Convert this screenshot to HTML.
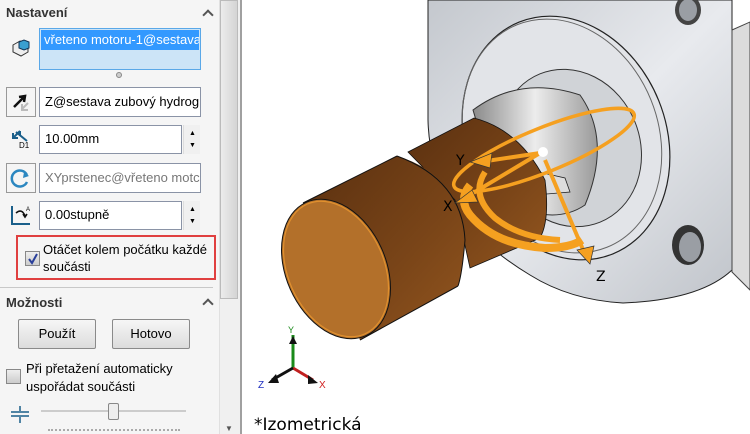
<!DOCTYPE html>
<html><head><meta charset="utf-8"><style>
*{margin:0;padding:0;box-sizing:border-box}
body{width:750px;height:434px;overflow:hidden;position:relative;background:#fff;font-family:"Liberation Sans",sans-serif;font-size:13px;color:#000}
.panel{position:absolute;left:0;top:0;width:220px;height:434px;background:#f5f5f5}
.abs{position:absolute}
.inp{position:absolute;background:#fff;border:1px solid #8a93a6;padding:0 0 0 5px;line-height:26px;white-space:nowrap;overflow:hidden;font-size:13px}
.spin{position:absolute;width:17px;background:#f0f0f0;border-left:1px solid #ddd}
.btn{position:absolute;border:1px solid #8a8a8a;border-radius:2px;background:linear-gradient(#f6f6f6,#dcdcdc);text-align:center;line-height:28px;font-size:13px}
.hdr{position:absolute;font-weight:bold;color:#333;font-size:13px}
.chev{position:absolute;width:8px;height:8px;border-left:2px solid #555;border-top:2px solid #555;transform:rotate(45deg)}
</style></head><body>
<div class="panel">
 <div class="hdr" style="left:6px;top:5px">Nastavení</div>
 <div class="chev" style="left:204px;top:11px"></div>
 <svg class="abs" style="left:10px;top:36px" width="22" height="22"><path d="M3 9 L10 5 L18 8 L18 16 L11 20 L3 16 Z" fill="#eee" stroke="#333"/><path d="M9 6 L14 4 L19 6 L19 12 L14 14 L9 12Z" fill="#3a9fd0" stroke="#135"/></svg>
 <div class="abs" style="left:39px;top:28px;width:162px;height:42px;border:1px solid #5aa8e8;background:#cce4f7"></div>
 <div class="abs" style="left:41px;top:30px;width:158px;height:20px;background:#3399ff;color:#fff;padding-left:3px;line-height:19px;white-space:nowrap;overflow:hidden">vřeteno motoru-1@sestava</div>
 <div class="abs" style="left:116px;top:72px;width:6px;height:6px;border-radius:50%;border:1px solid #888;background:#ccc"></div>

 <div class="abs" style="left:6px;top:87px;width:30px;height:30px;border:1px solid #999;background:#f5f5f5"></div>
 <svg class="abs" style="left:10px;top:91px" width="22" height="22"><path d="M4 16 L14 6 M9 6 L15 5 L14 11" stroke="#111" stroke-width="2.5" fill="none"/><path d="M12 18 L18 12 M12 13 L12 19 L18 19" stroke="#bbb" stroke-width="2" fill="none"/></svg>
 <div class="inp" style="left:39px;top:87px;width:162px;height:30px;line-height:28px">Z@sestava zubový hydrog</div>

 <svg class="abs" style="left:10px;top:128px" width="22" height="22"><path d="M3 10 L10 3 M3 5 L3 10 L8 10 M10 3 L10 8" stroke="#1a5f8a" stroke-width="2" fill="none"/><path d="M6 4 L17 13" stroke="#1a5f8a" stroke-width="2"/><text x="9" y="20" font-size="8" font-family="Liberation Sans">D1</text></svg>
 <div class="inp" style="left:39px;top:125px;width:143px;height:29px">10.00mm</div>
 <div class="spin" style="left:183px;top:125px;height:29px"><span class="abs" style="left:5px;top:5px;font-size:7px">▲</span><span class="abs" style="left:5px;top:17px;font-size:7px">▼</span></div>

 <div class="abs" style="left:6px;top:163px;width:30px;height:30px;border:1px solid #999;background:#f5f5f5"></div>
 <svg class="abs" style="left:10px;top:167px" width="22" height="22"><path d="M17 8 A8 8 0 1 0 17 15" stroke="#2c87c0" stroke-width="2.5" fill="none"/><path d="M14 5 L19 9 L13 11Z" fill="#2c87c0"/></svg>
 <div class="inp" style="left:39px;top:163px;width:162px;height:30px;line-height:28px;color:#777">XYprstenec@vřeteno motc</div>

 <svg class="abs" style="left:10px;top:204px" width="22" height="22"><path d="M2 2 L2 20 L20 20" stroke="#1a5f8a" stroke-width="2" fill="none"/><path d="M6 9 Q12 4 15 12 M13 10 L15 13 L17 10" stroke="#111" stroke-width="1.6" fill="none"/><text x="16" y="7" font-size="6">A</text></svg>
 <div class="inp" style="left:39px;top:201px;width:143px;height:29px">0.00stupně</div>
 <div class="spin" style="left:183px;top:201px;height:29px"><span class="abs" style="left:5px;top:5px;font-size:7px">▲</span><span class="abs" style="left:5px;top:17px;font-size:7px">▼</span></div>

 <div class="abs" style="left:16px;top:235px;width:200px;height:45px;border:2px solid #e04040"></div>
 <div class="abs" style="left:25px;top:251px;width:15px;height:15px;border:1px solid #888;background:linear-gradient(#eee,#ccc)"></div>
 <svg class="abs" style="left:26px;top:252px" width="14" height="14"><path d="M3 7 L6 11 L11 2" stroke="#2a3f9a" stroke-width="2" fill="none"/></svg>
 <div class="abs" style="left:43px;top:241px;line-height:17px;font-size:13px">Otáčet kolem počátku každé<br>součásti</div>
 <div class="abs" style="left:0;top:287px;width:213px;height:1px;background:#c8c8c8"></div>
 <div class="hdr" style="left:6px;top:295px">Možnosti</div>
 <div class="chev" style="left:204px;top:300px"></div>
 <div class="btn" style="left:18px;top:319px;width:78px;height:30px">Použít</div>
 <div class="btn" style="left:112px;top:319px;width:78px;height:30px">Hotovo</div>
 <div class="abs" style="left:6px;top:369px;width:15px;height:15px;border:1px solid #888;background:linear-gradient(#eee,#ccc)"></div>
 <div class="abs" style="left:26px;top:360px;line-height:18px">Při přetažení automaticky<br>uspořádat součásti</div>
 <svg class="abs" style="left:10px;top:404px" width="20" height="20"><path d="M1 8 H19 M1 12 H19 M10 2 V7 M10 13 V19" stroke="#1a5f8a" stroke-width="1.5"/></svg>
 <div class="abs" style="left:41px;top:410px;width:145px;height:2px;background:#ccc"></div>
 <div class="abs" style="left:108px;top:403px;width:11px;height:17px;border:1px solid #888;background:#eee;border-radius:2px"></div>
 <div class="abs" style="left:48px;top:429px;width:132px;height:3px;border-top:2px dotted #aaa"></div>
</div>
<div class="abs" style="left:219px;top:0;width:21px;height:434px;background:#f0f0f0;border-left:1px solid #e0e0e0"></div>
<div class="abs" style="left:220px;top:0;width:18px;height:299px;background:linear-gradient(90deg,#ececec,#d4d4d4);border:1px solid #bbb"></div>
<div class="abs" style="left:225px;top:424px;font-size:8px;color:#555">▼</div>
<div class="abs" style="left:240px;top:0;width:2px;height:434px;background:#a0a0a0"></div>
<svg class="abs" style="left:242px;top:0" width="508" height="434" viewBox="242 0 508 434">
 <defs>
  <linearGradient id="g1" x1="0" y1="0" x2="1" y2="1"><stop offset="0" stop-color="#c4c8ce"/><stop offset="0.5" stop-color="#e8eaee"/><stop offset="1" stop-color="#c0c4ca"/></linearGradient>
  <linearGradient id="cu" x1="0" y1="0" x2="1" y2="1"><stop offset="0" stop-color="#5a3010"/><stop offset="0.6" stop-color="#7a4518"/><stop offset="1" stop-color="#93561f"/></linearGradient>
  <linearGradient id="sh" x1="0" y1="0" x2="1" y2="0"><stop offset="0" stop-color="#8a8a8a"/><stop offset="0.5" stop-color="#ececec"/><stop offset="1" stop-color="#9a9a9a"/></linearGradient>
 </defs>
 <path d="M428 0 H732 V270 Q700 300 623 303 Q570 300 530 275 Q430 215 428 120 Z" fill="url(#g1)" stroke="#222"/>
 <path d="M732 30 L750 22 V290 L732 272Z" fill="#dcdcdc" stroke="#444"/>
 <ellipse cx="688" cy="10" rx="13" ry="15" fill="#444"/><ellipse cx="688" cy="10" rx="9" ry="11" fill="#9a9ea4"/>
 <ellipse cx="688" cy="245" rx="16" ry="20" fill="#333"/><ellipse cx="690" cy="247" rx="11" ry="15" fill="#9a9ea4"/>
 <ellipse cx="566" cy="138" rx="100" ry="125" transform="rotate(-22 566 138)" fill="#e2e4e8" stroke="#222" stroke-width="1.2"/>
 <ellipse cx="562" cy="136" rx="96" ry="120" transform="rotate(-22 562 136)" fill="none" stroke="#666"/>
 <ellipse cx="570" cy="148" rx="70" ry="80" transform="rotate(-22 570 148)" fill="#d0d3d7" stroke="#333"/>
 <path d="M473 110 Q520 75 580 95 Q612 140 585 205 Q560 222 525 210 Q490 170 473 110Z" fill="url(#sh)" stroke="#333"/>
 <path d="M530 170 L565 178 L570 192 L535 195Z" fill="#ddd" stroke="#222" stroke-width="0.8"/>
 <path d="M408 152 L474 118 Q520 130 545 180 Q550 220 540 238 L470 268 L455 200Z" fill="url(#cu)" stroke="#111" stroke-width="0.8"/>
 <path d="M303 203 L397 156 Q460 175 465 240 Q462 275 458 286 L360 340 Z" fill="url(#cu)"/>
 <path d="M397 156 Q462 180 465 240 Q462 275 458 286" fill="none" stroke="#111"/>
 <path d="M303 203 L397 156 M360 340 L458 286" stroke="#111" fill="none"/>
 <ellipse cx="336" cy="269" rx="50" ry="73" transform="rotate(-24 336 269)" fill="#b3702a" stroke="#111"/>
 <ellipse cx="336" cy="269" rx="48" ry="71" transform="rotate(-24 336 269)" fill="none" stroke="#e0902e" stroke-width="1.2"/>
 <ellipse cx="544" cy="150" rx="97" ry="22" transform="rotate(-22 544 150)" fill="none" stroke="#f5a020" stroke-width="3.5"/>
 <path d="M470 185 Q458 200 470 215 Q495 245 545 248 Q570 248 582 240" fill="none" stroke="#f5a020" stroke-width="8"/>
 <path d="M485 172 Q470 195 495 218 Q520 238 560 240" fill="none" stroke="#f5a020" stroke-width="6"/>
 <g stroke="#f5a020" stroke-width="4" fill="none">
  <path d="M540 153 L480 162"/><path d="M540 153 L465 198"/><path d="M545 160 L584 252"/>
 </g>
 <path d="M470 162 L492 153 L490 168Z M455 203 L472 190 L478 202Z M577 250 L594 246 L590 264Z" fill="#f5a020" stroke="#333" stroke-width="0.7"/>
 <circle cx="543" cy="152" r="5" fill="#fff"/>
 <text x="456" y="165" font-size="14" font-family="DejaVu Sans">Y</text>
 <text x="443" y="211" font-size="14" font-family="DejaVu Sans">X</text>
 <text x="596" y="281" font-size="14" font-family="DejaVu Sans">Z</text>
 <path d="M293 335 V368" stroke="#1a8a1a" stroke-width="3"/>
 <path d="M293 368 L313 380" stroke="#c02020" stroke-width="3"/>
 <path d="M293 368 L272 380" stroke="#111" stroke-width="3"/>
 <path d="M289 344 L293 336 L297 344Z M308 375 L318 383 L308 384Z M276 374 L268 383 L279 383Z" fill="#111"/>
 <text x="288" y="333" font-size="9" fill="#1a8a1a">Y</text>
 <text x="319" y="388" font-size="10" fill="#d02020">X</text>
 <text x="258" y="388" font-size="10" fill="#2030c0">Z</text>
 <text x="254" y="430" font-size="17" font-family="DejaVu Sans">*Izometrická</text>
</svg>
</body></html>
